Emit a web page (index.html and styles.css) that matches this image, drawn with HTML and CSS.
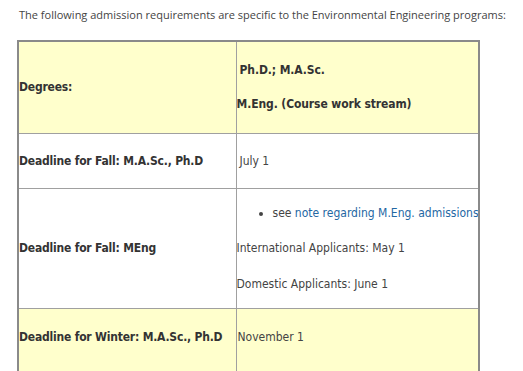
FILE: index.html
```html
<!DOCTYPE html>
<html>
<head>
<meta charset="utf-8">
<link rel="stylesheet" href="styles.css">
</head>
<body>
<p class="intro">The following admission requirements are specific to the Environmental Engineering programs:</p>
<table class="req">
  <colgroup><col class="c1"><col class="c2"></colgroup>
  <tr class="r1 yellow">
    <td class="label">Degrees:</td>
    <td class="val">
      <p class="b first">Ph.D.; M.A.Sc.</p>
      <p class="b second">M.Eng. (Course work stream)</p>
    </td>
  </tr>
  <tr class="r2">
    <td class="label">Deadline for Fall: M.A.Sc., Ph.D</td>
    <td class="val"><span class="ind">July 1</span></td>
  </tr>
  <tr class="r3">
    <td class="label">Deadline for Fall: MEng</td>
    <td class="val">
      <ul class="bul"><li>see <a href="#">note regarding M.Eng. admissions</a></li></ul>
      <p class="line">International Applicants: May 1</p>
      <p class="line">Domestic Applicants: June 1</p>
    </td>
  </tr>
  <tr class="r4 yellow">
    <td class="label">Deadline for Winter: M.A.Sc., Ph.D</td>
    <td class="val"><span class="ind2">November 1</span></td>
  </tr>
</table>
</body>
</html>
```
FILE: styles.css
```css
html, body {
  margin: 0;
  padding: 0;
  background: #fff;
  overflow: hidden;
}
.intro {
  margin: 6px 0 0 19px;
  font-family: "Open Sans", sans-serif;
  font-size: 11px;
  color: #444;
  line-height: 18px;
  white-space: nowrap;
}
.req {
  margin: 16px 0 0 17px;
  width: 463px;
  border-collapse: collapse;
  table-layout: fixed;
  border-top: 2px solid #8a8a8a;
  border-left: 2px solid #8a8a8a;
  border-right: 2px solid #8a8a8a;
  font-family: "DejaVu Sans Condensed", "DejaVu Sans", sans-serif;
  font-size: 12px;
  color: #444;
}
.c1 { width: 218px; }
.req td {
  border: 1px solid #a0a0a0;
  padding: 0;
  vertical-align: middle;
  overflow: hidden;
  white-space: nowrap;
}
.yellow td { background: #ffffcc; }
.r1 { height: 92px; }
.r2 { height: 55px; }
.r3 { height: 120px; }
.r4 { height: 80px; }
.r4 td { vertical-align: top; padding-top: 21px; }
.label {
  font-weight: bold;
  color: #333;
  letter-spacing: -0.2px;
}
.b { font-weight: bold; color: #333; margin: 0; line-height: 14px; letter-spacing: -0.1px; }
.first { padding-left: 3px; margin-bottom: 20px; }
.val { padding-left: 0; }
.ind { padding-left: 3px; }
.ind2 { padding-left: 1px; }
.bul {
  margin: 0 0 21px 0;
  padding-left: 36px;
  list-style: disc;
}
.bul li { line-height: 14px; }
.bul a { color: #2467a3; text-decoration: none; }
.line { margin: 0 0 22px 0; line-height: 14px; }
.line:last-child { margin-bottom: 0; }
```
